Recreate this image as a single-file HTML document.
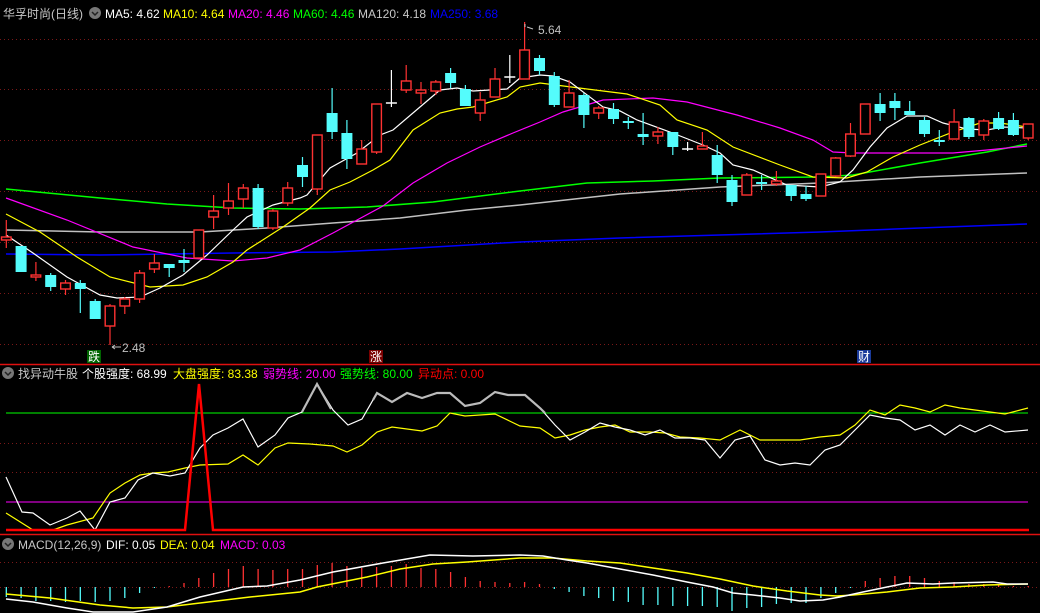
<!DOCTYPE html>
<html><head><meta charset="utf-8"><style>
html,body{margin:0;padding:0;background:#000;width:1040px;height:613px;overflow:hidden}
svg{display:block}
text{font-family:"Liberation Sans","Noto Sans CJK SC",sans-serif;font-size:12px}
</style></head><body>
<svg id="s" width="1040" height="613" viewBox="0 0 1040 613" xmlns="http://www.w3.org/2000/svg">
<rect width="1040" height="613" fill="#000"/>
<g stroke="#7a1818" stroke-width="1" stroke-dasharray="1,3">
<line x1="0" y1="39.5" x2="1040" y2="39.5"/><line x1="0" y1="89.5" x2="1040" y2="89.5"/>
<line x1="0" y1="140.5" x2="1040" y2="140.5"/><line x1="0" y1="191.5" x2="1040" y2="191.5"/>
<line x1="0" y1="242.5" x2="1040" y2="242.5"/><line x1="0" y1="293.5" x2="1040" y2="293.5"/>
<line x1="0" y1="344.5" x2="1040" y2="344.5"/>
<line x1="0" y1="443.5" x2="1040" y2="443.5"/><line x1="0" y1="472.5" x2="1040" y2="472.5"/>
<line x1="0" y1="562.5" x2="1040" y2="562.5"/><line x1="0" y1="587.5" x2="1040" y2="587.5"/>
</g>
<line x1="0" y1="364.5" x2="1040" y2="364.5" stroke="#e01010" stroke-width="1.5"/>
<line x1="0" y1="534.5" x2="1040" y2="534.5" stroke="#e01010" stroke-width="1.5"/>
<g fill="none" stroke-width="1.2">
<polyline stroke="#0000ff" stroke-width="1.5" points="6,254 100,255 233,253 333,252 400,249 520,242 620,238 720,235 820,232 920,228 1027,224"/>
<polyline stroke="#c0c0c0" stroke-width="1.5" points="6,230 100,232 200,232 267,228 333,223 400,218 467,210 520,205 620,194 720,187 820,183 920,177 1027,173"/>
<polyline stroke="#00ff00" stroke-width="1.5" points="6,189 100,198 167,204 233,208 300,209 367,207 433,202 520,191 587,183 653,181 720,178 820,177 853,175 920,163 987,152 1027,144"/>
<polyline stroke="#ff00ff" points="6,198 67,220 133,247 187,258 233,261 267,258 300,250 333,233 383,206 413,183 447,163 480,147 513,133 540,122 563,112 603,100 653,98 687,102 737,115 780,128 813,140 833,152 853,153 953,153 987,150 1027,146"/>
<polyline stroke="#ffff00" points="6,214 40,232 77,257 110,277 150,287 183,285 207,277 233,262 247,250 283,227 310,208 330,190 350,182 373,170 390,160 413,130 440,113 457,109 473,107 507,97 520,87 540,83 587,89 627,94 660,105 677,120 707,130 733,147 780,165 813,177 847,178 867,172 893,157 920,145 953,132 980,123 1000,123 1027,127"/>
<polyline stroke="#ffffff" points="6,235 33,253 67,277 100,295 117,298 140,297 160,288 183,275 207,255 233,230 247,217 273,205 300,198 307,195 330,168 357,153 380,135 393,130 420,107 440,90 457,88 473,91 507,89 520,78 540,75 553,76 570,82 603,107 620,111 637,120 670,132 703,145 720,153 733,165 753,170 787,185 820,187 840,182 853,170 870,147 887,128 907,116 927,116 943,123 967,129 987,130 1003,127 1027,128"/>
</g>
<g id="candles"></g>
<path d="M525,24 L525,27 M527,27 L533,29" stroke="#c0c0c0" stroke-width="1" fill="none"/>
<text x="538" y="34" fill="#c0c0c0">5.64</text>
<path d="M112,347 L121,347 M112,347 L115,345 M112,347 L115,349" stroke="#c0c0c0" stroke-width="1" fill="none"/>
<text x="122" y="352" fill="#c0c0c0">2.48</text>
<rect x="87" y="350" width="14" height="13" fill="#006400"/><text x="88" y="361" fill="#fff">跌</text>
<rect x="369" y="350" width="14" height="13" fill="#7a0000"/><text x="370" y="361" fill="#fff">涨</text>
<rect x="857" y="350" width="14" height="13" fill="#1a3a9a"/><text x="858" y="361" fill="#fff">财</text>
<text x="3" y="18" fill="#c8c8c8" font-size="13.5">华孚时尚(日线)</text>
<circle cx="95" cy="13" r="6" fill="#777"/><path d="M92,12 L95,15 L98,12" stroke="#222" stroke-width="1.5" fill="none"/>
<text x="105" y="18" fill="#fff">MA5: 4.62</text>
<text x="163" y="18" fill="#ffff00">MA10: 4.64</text>
<text x="228" y="18" fill="#ff00ff">MA20: 4.46</text>
<text x="293" y="18" fill="#00ff00">MA60: 4.46</text>
<text x="358" y="18" fill="#c8c8c8">MA120: 4.18</text>
<text x="430" y="18" fill="#0000ff">MA250: 3.68</text>
<circle cx="8" cy="373" r="6" fill="#777"/><path d="M5,372 L8,375 L11,372" stroke="#222" stroke-width="1.5" fill="none"/>
<text x="18" y="378" fill="#c8c8c8">找异动牛股</text>
<text x="82" y="378" fill="#fff">个股强度: 68.99</text>
<text x="173" y="378" fill="#ffff00">大盘强度: 83.38</text>
<text x="263" y="378" fill="#ff00ff">弱势线: 20.00</text>
<text x="340" y="378" fill="#00ff00">强势线: 80.00</text>
<text x="418" y="378" fill="#ff0000">异动点: 0.00</text>
<line x1="6" y1="413" x2="1028" y2="413" stroke="#00ff00" stroke-width="1"/>
<line x1="6" y1="502" x2="1028" y2="502" stroke="#ff00ff" stroke-width="1"/>
<g fill="none" stroke-width="1.2">
<polyline stroke="#ffff00" points="6,513 33,530 53,530 67,525 93,518 110,493 125,483 140,475 153,473 168,472 185,468 200,465 228,464 243,455 258,465 275,448 288,443 310,444 333,446 347,452 362,445 377,432 392,427 422,431 437,426 450,413 465,416 495,414 520,426 540,428 555,438 570,435 585,430 600,427 615,425 630,432 650,432 665,433 680,437 700,438 720,440 740,430 760,440 780,440 800,440 820,437 840,435 855,425 870,410 885,415 900,405 915,408 930,412 945,405 960,408 975,410 990,412 1005,414 1028,408"/>
<polyline stroke="#ffffff" points="6,477 22,512 33,513 50,525 67,518 80,511 95,530 110,502 125,498 138,480 153,473 170,476 185,473 200,448 213,435 228,428 243,419 258,447 275,435 288,418 302,412 317,384 333,410 348,425 362,419 377,393 392,402 407,393 422,398 437,393 450,393 465,406 480,403 495,392 508,395 525,395 540,408 555,425 570,440 585,432 600,423 615,427 630,430 645,435 660,430 675,438 690,438 705,440 720,458 735,440 750,436 765,460 780,465 795,463 810,465 825,450 840,445 855,430 870,415 885,418 900,420 915,430 930,425 945,435 960,425 975,432 990,425 1005,432 1028,430"/>
<polyline stroke="#bbbbbb" stroke-width="2.2" points="302,412 317,384 331,409"/>
<polyline stroke="#bbbbbb" stroke-width="2.2" points="373,400 377,393 392,402 407,393 422,398 437,393 450,393 465,406 480,403 495,392 508,395 525,395 540,408 545,413"/>
<polyline stroke="#ff0000" stroke-width="2.5" points="6,530 185,530 199,384 213,530 1029,530"/>
</g>
<circle cx="8" cy="544" r="6" fill="#777"/><path d="M5,543 L8,546 L11,543" stroke="#222" stroke-width="1.5" fill="none"/>
<text x="18" y="549" fill="#c8c8c8">MACD(12,26,9)</text>
<text x="106" y="549" fill="#fff">DIF: 0.05</text>
<text x="160" y="549" fill="#ffff00">DEA: 0.04</text>
<text x="220" y="549" fill="#ff00ff">MACD: 0.03</text>
<g id="bars"></g>
<g fill="none" stroke-width="1.5">
<polyline stroke="#ffff00" points="6,594 50,598 100,605 133,608 167,607 200,603 250,597 300,592 317,587 367,577 400,569 433,564 467,562 520,558 553,558 587,561 620,563 653,568 687,573 720,579 753,586 787,591 820,595 837,596 853,595 887,592 920,588 953,587 987,585 1028,584"/>
<polyline stroke="#ffffff" points="6,599 33,602 67,608 93,612 133,612 167,607 200,597 243,587 267,586 300,580 333,572 383,563 430,555 473,556 520,555 543,556 567,560 587,563 620,569 653,575 687,582 713,587 733,593 753,595 780,598 800,601 823,600 840,597 863,592 887,587 907,583 933,584 953,583 993,582 1007,584 1028,584"/>
</g>
</svg>
<script>
var C=[["r",237,240,220,248],["c",246,272,246,272],["r",275,276,262,281],["c",275,287,273,291],["r",283,289,280,295],["c",283,289,280,313],["c",301,319,299,319],["r",306,326,304,345],["r",299,306,297,314],["r",273,299,270,303],["r",263,269,254,273],["c",264,268,264,277],["c",260,263,249,272],["r",230,258,230,258],["r",211,217,195,229],["r",201,208,183,215],["r",188,199,184,208],["c",188,227,184,229],["r",211,228,209,230],["r",188,203,182,206],["c",165,177,157,187],["r",135,189,135,195],["c",113,132,88,139],["c",133,159,120,169],["r",149,164,140,164],["r",104,152,104,154],["w",103,103,70,107],["r",81,90,65,93],["r",90,93,82,104],["r",82,91,80,95],["c",73,83,68,88],["c",89,106,85,106],["r",100,113,92,121],["r",79,97,68,97],["w",77,77,55,83],["r",50,79,22,79],["c",58,71,55,75],["c",76,105,72,107],["r",93,107,80,107],["c",95,115,93,128],["r",108,113,106,119],["c",109,119,103,124],["c",121,123,117,129],["c",134,137,113,145],["r",132,136,127,144],["c",132,147,132,155],["w",149,149,142,151],["r",146,149,132,149],["c",155,175,145,183],["c",180,202,175,206],["r",175,195,173,195],["c",182,184,175,190],["r",181,184,171,186],["c",185,196,185,201],["c",194,199,186,201],["r",174,196,174,196],["r",158,176,157,177],["r",134,156,123,157],["r",104,134,104,134],["c",104,113,93,121],["c",101,108,93,120],["c",111,115,101,115],["c",120,134,117,137],["c",140,142,130,146],["r",122,139,109,139],["c",118,137,117,139],["r",121,135,119,140],["c",118,129,112,130],["c",120,135,113,136],["r",124,138,124,140]];
var B=[597,598,601,601,602,601,602,601,598,593,588,586,583,578,573,569,566,569,570,569,569,565,563,566,568,567,566,564,568,569,572,577,581,582,583,582,584,589,592,596,598,601,602,605,605,606,606,606,607,611,608,607,604,603,603,598,593,588,581,578,576,576,578,581,582,584,584,584,586,586];
var s="";
C.forEach(function(c,i){var x=(6.3+14.81*i).toFixed(1),t=c[0];
 if(t=="c"){s+='<line x1="'+x+'" y1="'+c[3]+'" x2="'+x+'" y2="'+c[4]+'" stroke="#54fcfc" stroke-width="1.2"/>';
  s+='<rect x="'+(x-5.5)+'" y="'+c[1]+'" width="11" height="'+Math.max(2,c[2]-c[1])+'" fill="#54fcfc"/>';}
 else if(t=="w"){s+='<line x1="'+x+'" y1="'+c[3]+'" x2="'+x+'" y2="'+c[4]+'" stroke="#fff" stroke-width="1.2"/><line x1="'+(x-5.5)+'" y1="'+c[1]+'" x2="'+(+x+5.5)+'" y2="'+c[1]+'" stroke="#fff" stroke-width="1.5"/>';}
 else{s+='<line x1="'+x+'" y1="'+c[3]+'" x2="'+x+'" y2="'+c[1]+'" stroke="#ff3232" stroke-width="1.2"/><line x1="'+x+'" y1="'+c[2]+'" x2="'+x+'" y2="'+c[4]+'" stroke="#ff3232" stroke-width="1.2"/>';
  s+='<rect x="'+(x-4.8)+'" y="'+c[1]+'" width="9.6" height="'+Math.max(2,c[2]-c[1])+'" fill="#000" stroke="#ff3232" stroke-width="1.4"/>';}
});
document.getElementById("candles").innerHTML=s;
var b="";B.forEach(function(y,i){var x=(6.3+14.81*i).toFixed(1);b+='<line x1="'+x+'" y1="587" x2="'+x+'" y2="'+y+'" stroke="'+(y>587?"#54fcfc":"#ff3232")+'" stroke-width="1.3"/>';});
document.getElementById("bars").innerHTML=b;
</script>
</body></html>
